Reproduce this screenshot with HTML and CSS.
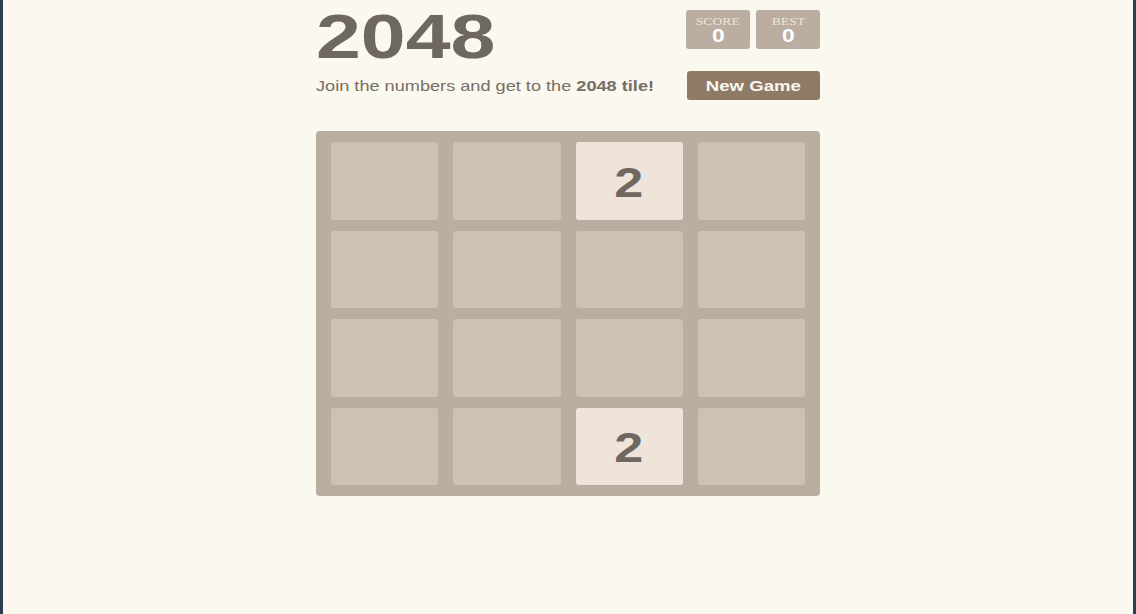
FILE: index.html
```html
<!DOCTYPE html>
<html>
<head>
<meta charset="utf-8">
<title>2048</title>
<link rel="stylesheet" href="styles.css">
</head>
<body>
<div class="container">
  <div class="heading">
    <h1 class="title"><span class="wide left">2048</span></h1>
    <div class="scores">
      <div class="score-box"><span class="label wide">SCORE</span><span class="value">0</span></div>
      <div class="score-box"><span class="label wide">BEST</span><span class="value">0</span></div>
    </div>
  </div>
  <div class="above-game">
    <p class="intro"><span class="wide left">Join the numbers and get to the <strong>2048 tile!</strong></span></p>
    <a class="restart-button"><span class="wide">New Game</span></a>
  </div>
  <div class="game-container">
    <div class="cell"></div>
    <div class="cell"></div>
    <div class="cell tile-2"><span class="wide">2</span></div>
    <div class="cell"></div>
    <div class="cell"></div>
    <div class="cell"></div>
    <div class="cell"></div>
    <div class="cell"></div>
    <div class="cell"></div>
    <div class="cell"></div>
    <div class="cell"></div>
    <div class="cell"></div>
    <div class="cell"></div>
    <div class="cell"></div>
    <div class="cell tile-2"><span class="wide">2</span></div>
    <div class="cell"></div>
  </div>
</div>
</body>
</html>
```
FILE: styles.css
```css
html, body {
 margin: 0;
 padding: 0;
 height: 100%;
}

body {
 background: #faf8ef;
 border-left: 3px solid #2c3e50;
 border-right: 3px solid #2c3e50;
 box-sizing: border-box;
 font-family: "Liberation Sans", Arial, sans-serif;
 color: #776e65;
}

/* the shot is stretched sideways, so text is too */
.wide {
 display: inline-block;
 transform: scaleX(1.24);
}

.wide.left {
 transform-origin: left center;
}

.container {
 width: 504px;
 margin: 0 auto;
}

.heading {
 display: flex;
 justify-content: space-between;
 align-items: flex-start;
 height: 71px;
}

.title {
 margin: 0;
 font-size: 63px;
 line-height: 72px;
 font-weight: bold;
 color: #6f6860;
}

.title .wide {
 transform: scaleX(1.28);
}

.scores {
 display: flex;
 gap: 6px;
 padding-top: 10px;
}

.score-box {
 width: 64px;
 height: 39px;
 background: #bbada0;
 border-radius: 3px;
 display: flex;
 flex-direction: column;
 align-items: center;
 color: #fff;
}

.score-box .label {
 font-family: "Liberation Serif", serif;
 font-size: 11px;
 line-height: 11px;
 margin-top: 6px;
 color: #eee4da;
}

.score-box .value {
 font-weight: bold;
 font-size: 19px;
 line-height: 18px;
 transform: scaleX(1.2);
}

.above-game {
 display: flex;
 justify-content: space-between;
 align-items: center;
 height: 29px;
}

.intro {
 margin: 0;
 font-size: 15px;
 color: #776e65;
}

.intro .wide {
 transform: scaleX(1.21);
}

.restart-button {
 width: 133px;
 height: 29px;
 line-height: 29px;
 text-align: center;
 background: #8f7a66;
 border-radius: 3px;
 color: #f9f6f2;
 font-weight: bold;
 font-size: 15px;
}

.game-container {
 margin-top: 31px;
 background: #bbada0;
 border-radius: 4px;
 padding: 11px 15px;
 display: grid;
 grid-template-columns: repeat(4, 1fr);
 grid-auto-rows: 77.5px;
 column-gap: 15px;
 row-gap: 11px;
}

.cell {
 background: #cdc1b4;
 border-radius: 3px;
}

.tile-2 {
 background: #eee4da;
 color: #6f6860;
 font-weight: bold;
 font-size: 42px;
 padding-top: 4px;
 box-sizing: border-box;
 display: flex;
 align-items: center;
 justify-content: center;
}
```
